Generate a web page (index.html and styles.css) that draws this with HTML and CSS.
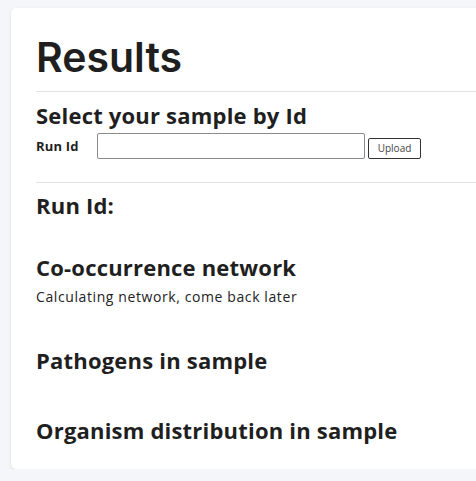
FILE: index.html
```html
<!DOCTYPE html>
<html lang="en">
<head>
<meta charset="utf-8">
<title>Results</title>
<link rel="stylesheet" href="styles.css">
</head>
<body>
<main class="card">
  <h1 class="title">Results</h1>
  <hr class="rule">
  <section class="select">
    <h2 class="heading select-title">Select your sample by Id</h2>
    <form class="run-form">
      <label class="run-label" for="runid">Run Id</label>
      <input class="run-input" id="runid" type="text">
      <button class="upload" type="button">Upload</button>
    </form>
  </section>
  <hr class="rule rule-2">
  <h3 class="heading runid">Run Id:</h3>
  <h3 class="heading cooc">Co-occurrence network</h3>
  <p class="note">Calculating network, come back later</p>
  <h3 class="heading patho">Pathogens in sample</h3>
  <h3 class="heading organ">Organism distribution in sample</h3>
</main>
</body>
</html>
```

FILE: styles.css
```css
html, body {
  margin: 0;
  padding: 0;
}
body {
  background: #f4f6fa;
  overflow: hidden;
  font-family: "Open Sans", sans-serif;
  color: #1f1f1f;
}
.card {
  margin: 8px 0 0 11px;
  height: 461px;
  box-sizing: border-box;
  background: #fff;
  border-radius: 5px 0 0 5px;
  box-shadow: 0 1px 3px rgba(0,0,0,0.12);
  padding: 24px 0 0 25px;
}
.title {
  font-family: Inter, sans-serif;
  font-weight: 600;
  font-size: 41px;
  line-height: 50px;
  margin: 0 0 9px;
}
.rule {
  border: 0;
  border-top: 1px solid #e2e2e2;
  margin: 0;
}
.heading {
  font-weight: 700;
  font-size: 22px;
  line-height: 30px;
  letter-spacing: 0.2px;
  margin: 0;
}
.select-title { margin-top: 8px; }
.run-form {
  display: flex;
  align-items: center;
  height: 26px;
  margin-top: 3px;
}
.run-label {
  font-weight: 700;
  font-size: 13px;
  width: 61px;
  letter-spacing: 0.2px;
}
.run-input {
  width: 268px;
  height: 26px;
  box-sizing: border-box;
  border: 1px solid #8a8a8a;
  border-radius: 2px;
  margin: 0 3px 0 0;
}
.upload {
  font-family: "Open Sans", sans-serif;
  font-size: 10px;
  color: #444;
  background: #fff;
  border: 1px solid #333;
  border-radius: 2px;
  width: 53px;
  height: 21px;
  padding: 0;
  margin-top: 4px;
}
.rule-2 { margin-top: 23px; }
.runid { margin-top: 7px; }
.cooc { margin-top: 32px; }
.note {
  font-size: 14px;
  line-height: 20px;
  letter-spacing: 0.6px;
  margin: 5px 0 0;
  color: #222;
}
.patho { margin-top: 38px; }
.organ { margin-top: 40px; }
```
